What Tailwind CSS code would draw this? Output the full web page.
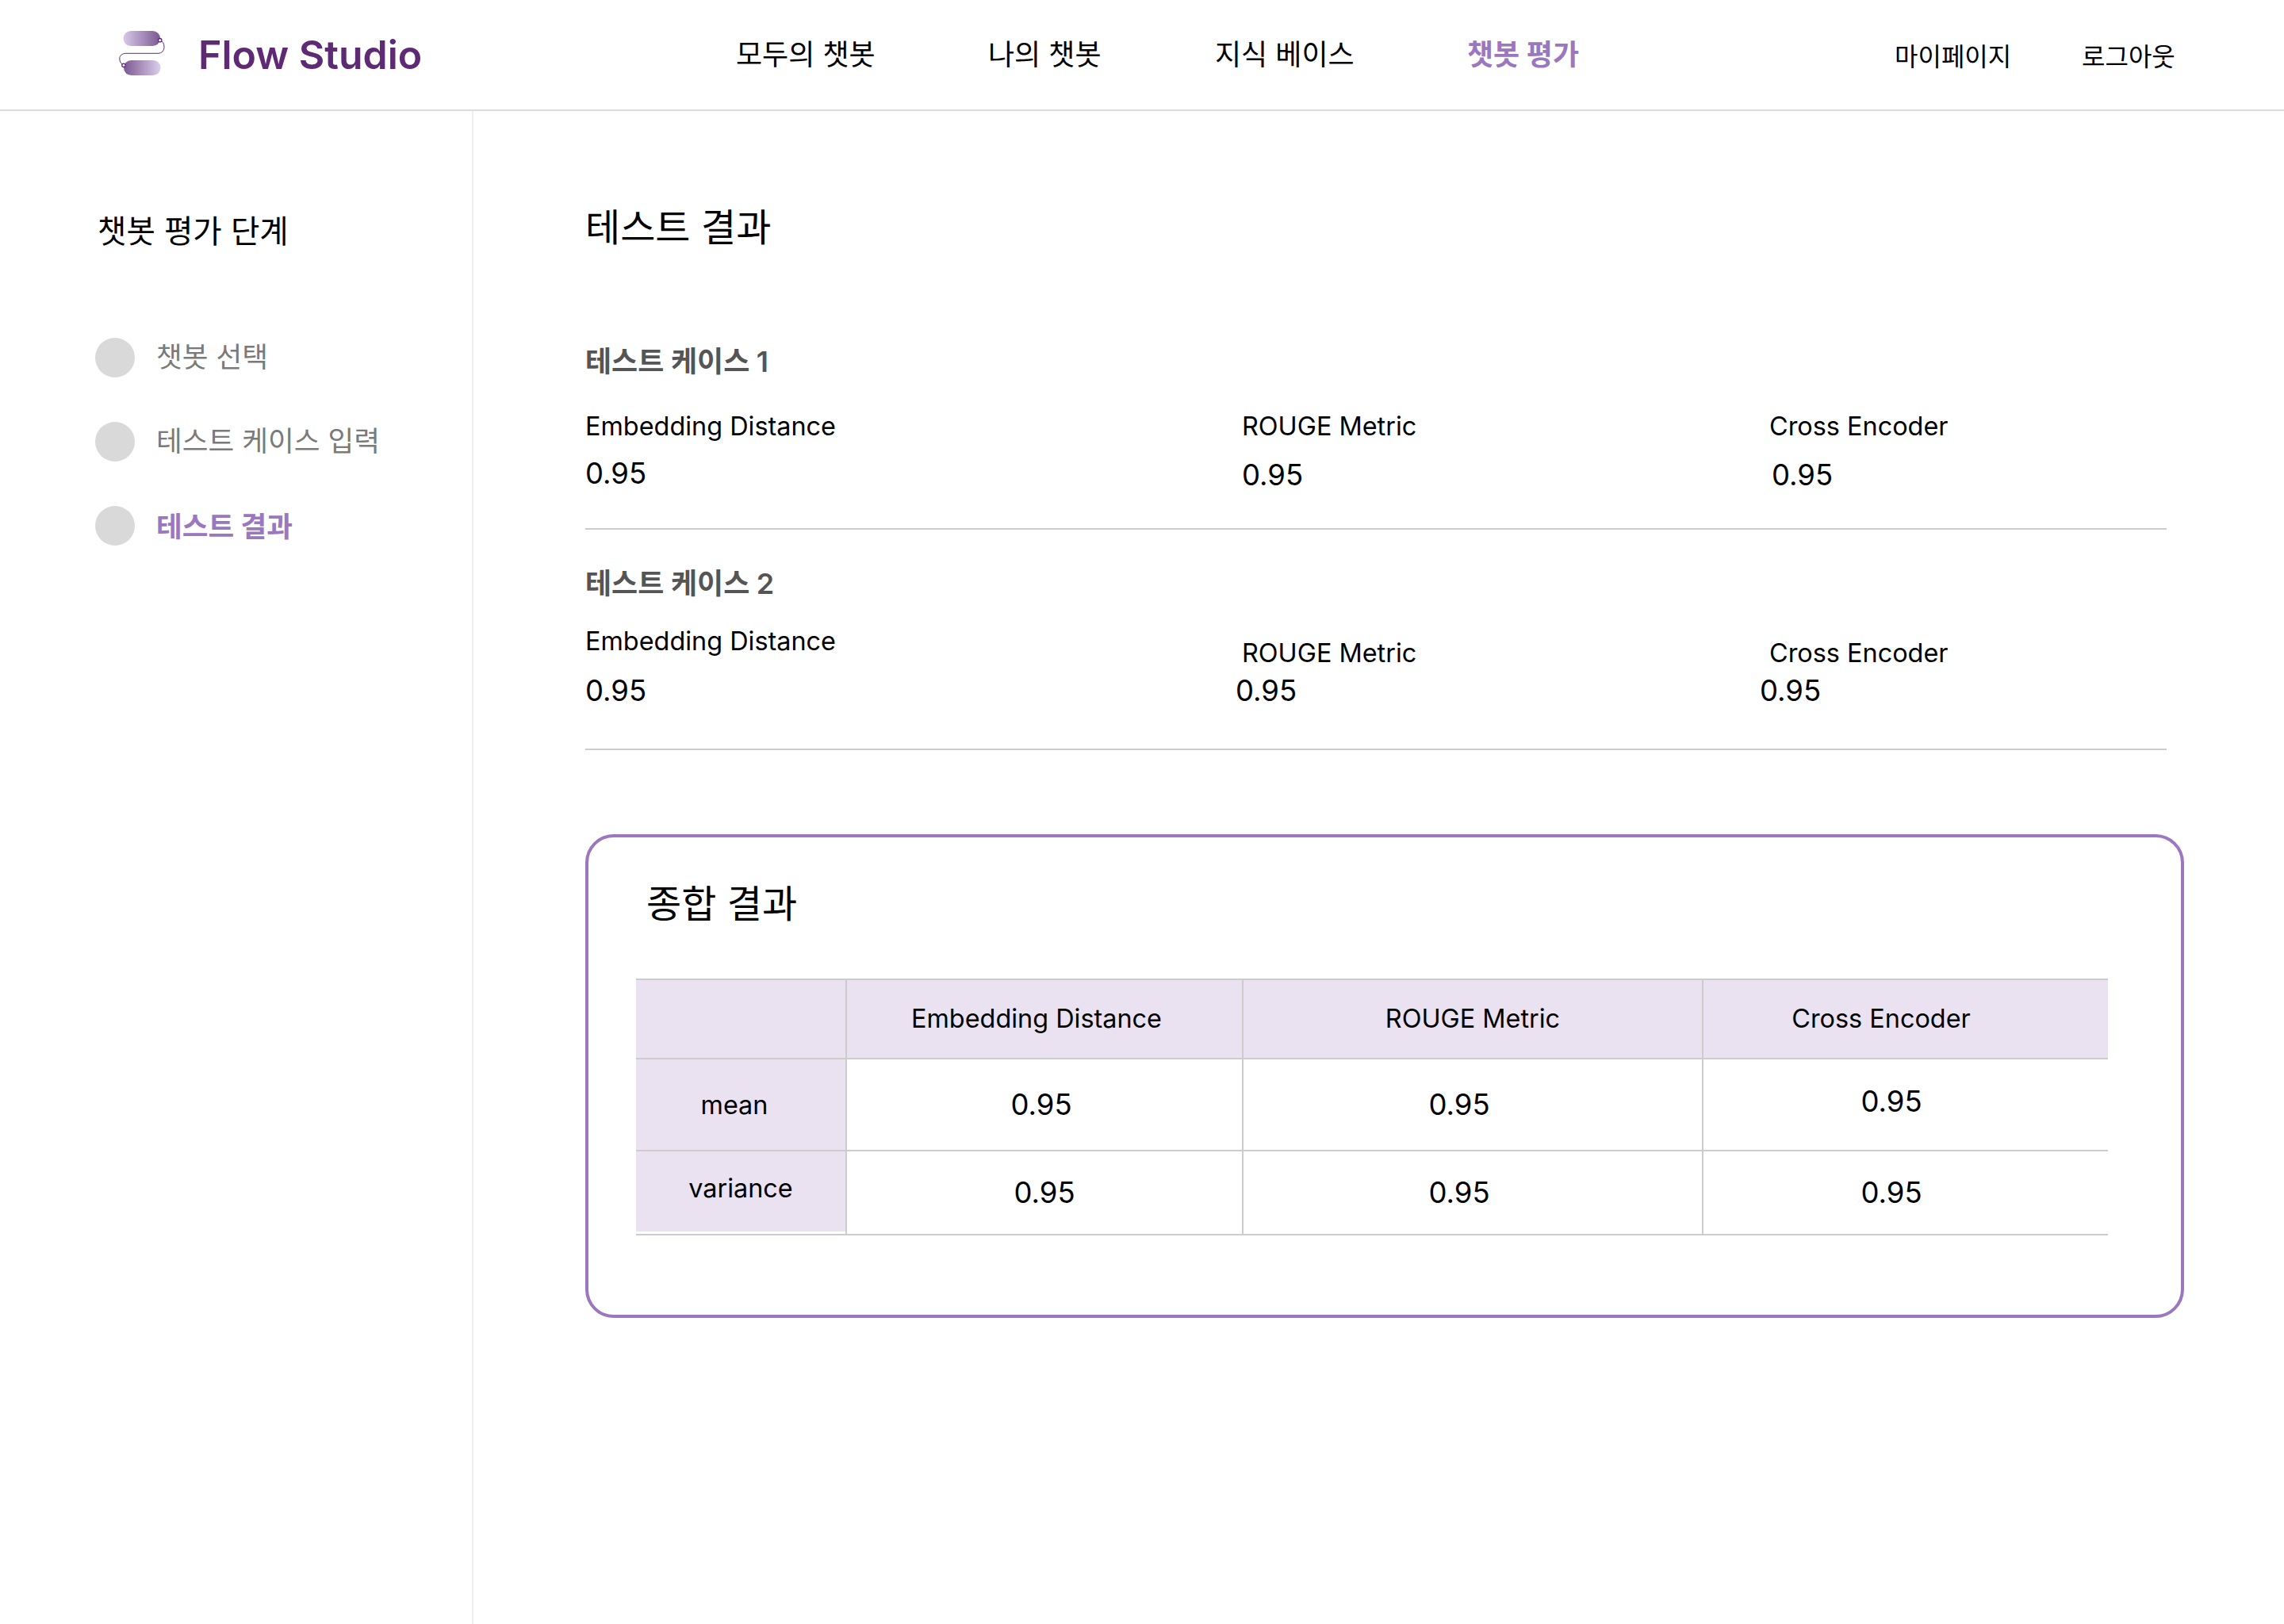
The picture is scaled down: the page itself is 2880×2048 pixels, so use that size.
<!DOCTYPE html>
<html lang="ko">
<head>
  <meta charset="UTF-8">
  <title>Flow Studio</title>
  <script src="https://cdn.jsdelivr.net/npm/@tailwindcss/browser@4"></script>
</head>
<body class="bg-white text-black font-['Inter','Noto_Sans_CJK_KR',sans-serif]">
  <!-- Header -->
  <header class="h-[140px] border-b-2 border-[#dcdce0] flex items-center">
    <div class="w-[928px] flex items-center pl-[150px] shrink-0">
      <svg class="w-[58px] h-[56px] shrink-0 mb-[4px]" viewBox="150 40 58 56" fill="none">
        <defs>
          <linearGradient id="pillTop" x1="0" y1="0" x2="1" y2="0">
            <stop offset="0" stop-color="#d8c9ea"/>
            <stop offset="1" stop-color="#7b5792"/>
          </linearGradient>
          <linearGradient id="pillBottom" x1="0" y1="0" x2="1" y2="0">
            <stop offset="0" stop-color="#7b5792"/>
            <stop offset="1" stop-color="#dccfec"/>
          </linearGradient>
        </defs>
        <rect x="155.5" y="40" width="46.5" height="19" rx="9.5" fill="url(#pillTop)"/>
        <rect x="156" y="77" width="46.5" height="19" rx="9.5" fill="url(#pillBottom)"/>
        <path d="M201.7 51.7C205 53 207 56 207 60C207 65 204 68.3 199 68.3H159C154 68.3 150.8 71 150.8 75C150.8 79 153 82 156 83.3" stroke="#5f2a74" stroke-width="1"/>
        <circle cx="201.7" cy="51.7" r="2.2" fill="#fff" stroke="#5f2a74" stroke-width="1.3"/>
        <circle cx="156" cy="83.3" r="2.2" fill="#fff" stroke="#5f2a74" stroke-width="1.3"/>
      </svg>
      <span class="ml-[42px] text-[50px] leading-none font-semibold text-[#5f2a74] font-['Inter']">Flow Studio</span>
    </div>
    <nav class="flex items-center text-[36px] leading-none">
      <a class="w-[318px]">모두의 챗봇</a>
      <a class="w-[286px]">나의 챗봇</a>
      <a class="w-[318px]">지식 베이스</a>
      <a class="w-[539px] font-bold text-[#9b77c0]">챗봇 평가</a>
    </nav>
    <div class="flex items-center text-[32px] leading-none pt-[5px]">
      <a class="w-[236px]">마이페이지</a>
      <a>로그아웃</a>
    </div>
  </header>

  <div class="flex">
    <!-- Steps -->
    <aside class="w-[597px] h-[1908px] border-r-2 border-[#eeeeee] shrink-0 pl-[120px]">
      <h2 class="text-[39.6px] leading-[48px] pl-[3px] mt-[128px]">챗봇 평가 단계</h2>
      <ul class="mt-[110px] text-[35.6px] leading-[50px] flex flex-col gap-[56px] text-[#7a7a7a]">
        <li class="flex items-center gap-[27px]"><span class="w-[50px] h-[50px] rounded-full bg-[#d9d9d9]"></span>챗봇 선택</li>
        <li class="flex items-center gap-[27px]"><span class="w-[50px] h-[50px] rounded-full bg-[#d9d9d9]"></span>테스트 케이스 입력</li>
        <li class="flex items-center gap-[27px] font-bold text-[#9b77c0]"><span class="w-[50px] h-[50px] rounded-full bg-[#d9d9d9]"></span><span class="leading-[44px] pt-[4px]">테스트 결과</span></li>
      </ul>
    </aside>

    <main class="pl-[141px] w-[2160px] shrink-0">
      <h1 class="text-[48px] leading-[60px] mt-[117px]">테스트 결과</h1>

      <!-- Test case 1 -->
      <section class="w-[1994px] h-[351px] border-b-2 border-[#cccccc] pt-[117px]">
        <h3 class="text-[36px] leading-[44px] font-bold text-[#555555]">테스트 케이스 <span class="font-semibold">1</span></h3>
        <div class="grid grid-cols-[828px_665px_1fr] text-[32.4px] leading-[40px] mt-[40px]">
          <span>Embedding Distance</span>
          <span>ROUGE Metric</span>
          <span>Cross Encoder</span>
          <span class="text-[36.5px] leading-[46px] mt-[16px]">0.95</span>
          <span class="text-[36.5px] leading-[46px] mt-[18px]">0.95</span>
          <span class="text-[36.5px] leading-[46px] mt-[18px] pl-[3px]">0.95</span>
        </div>
      </section>

      <!-- Test case 2 -->
      <section class="w-[1994px] h-[278px] border-b-2 border-[#cccccc] pt-[46px]">
        <h3 class="text-[36px] leading-[44px] font-bold text-[#555555]">테스트 케이스 <span class="font-semibold">2</span></h3>
        <div class="grid grid-cols-[828px_665px_1fr] text-[32.4px] leading-[40px] mt-[31px]">
          <span>Embedding Distance</span>
          <span class="pt-[15px]">ROUGE Metric</span>
          <span class="pt-[15px]">Cross Encoder</span>
          <span class="text-[36.5px] leading-[46px] mt-[4px]">0.95</span>
          <span class="text-[36.5px] leading-[46px] mt-[4px] ml-[-8px]">0.95</span>
          <span class="text-[36.5px] leading-[46px] mt-[4px] ml-[-12px]">0.95</span>
        </div>
      </section>

      <!-- Summary -->
      <section class="w-[2016px] h-[610px] mt-[106px] border-[4px] border-[#9b77c0] rounded-[36px] pl-[60px]">
        <h2 class="text-[48px] leading-[60px] mt-[54px] ml-[13px]">종합 결과</h2>
        <table class="table-fixed border-collapse w-[1856px] mt-[64px] text-center text-[32.4px] leading-[40px]">
          <colgroup>
            <col class="w-[265px]"><col class="w-[500px]"><col class="w-[580px]"><col class="w-[511px]">
          </colgroup>
          <thead class="bg-[#eae2f1]">
            <tr class="h-[100px] border-y-2 border-[#cccccc]">
              <th class="font-normal border-r-2 border-[#cccccc]"></th>
              <th class="font-normal border-r-2 border-[#cccccc] pr-[20px]">Embedding Distance</th>
              <th class="font-normal border-r-2 border-[#cccccc]">ROUGE Metric</th>
              <th class="font-normal pr-[62px]">Cross Encoder</th>
            </tr>
          </thead>
          <tbody class="text-[36.5px]">
            <tr class="h-[116px] border-b-2 border-[#cccccc]">
              <td class="bg-[#eae2f1] text-[32.4px] border-r-2 border-[#cccccc] pr-[16px] pt-[2px]">mean</td>
              <td class="border-r-2 border-[#cccccc] pr-[8px]">0.95</td>
              <td class="border-r-2 border-[#cccccc] pr-[34px]">0.95</td>
              <td class="pr-[36px] pb-[8px]">0.95</td>
            </tr>
            <tr class="h-[106px] border-b-2 border-[#cccccc]">
              <td class="bg-[linear-gradient(#eae2f1,#eae2f1)] bg-no-repeat bg-[size:100%_calc(100%-3px)] text-[32.4px] border-r-2 border-[#cccccc] pb-[10px]">variance</td>
              <td class="border-r-2 border-[#cccccc]">0.95</td>
              <td class="border-r-2 border-[#cccccc] pr-[34px]">0.95</td>
              <td class="pr-[36px]">0.95</td>
            </tr>
          </tbody>
        </table>
      </section>
    </main>
  </div>
</body>
</html>
